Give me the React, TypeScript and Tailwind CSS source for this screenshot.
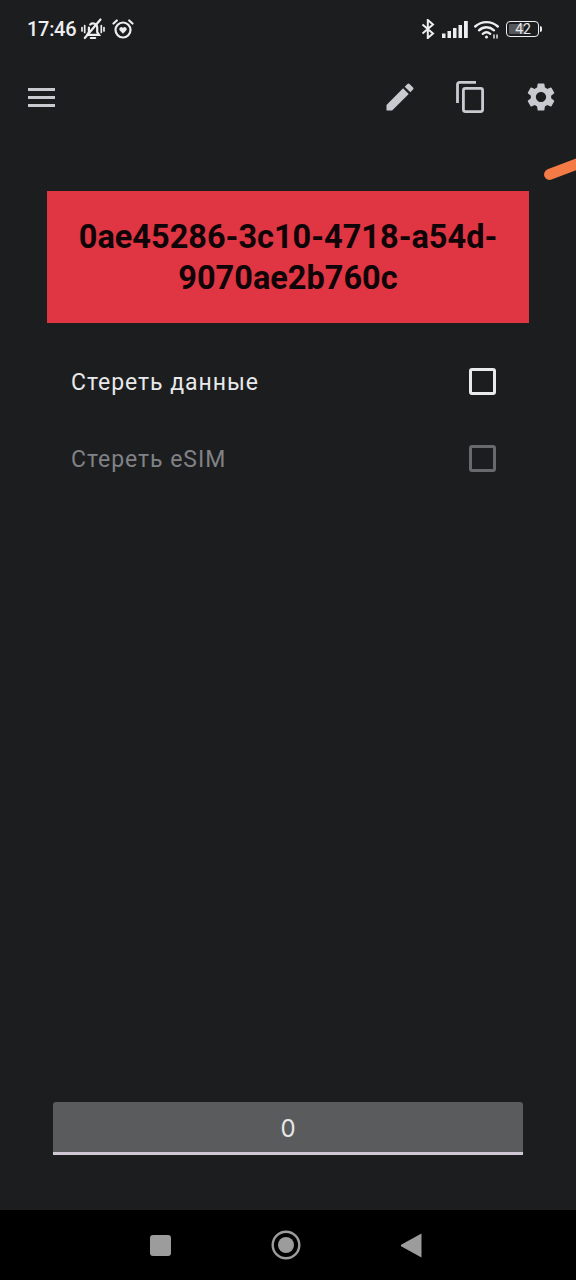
import { MdEdit, MdSettings } from 'react-icons/md'

function BellMuted() {
  return (
    <svg width="24" height="24" viewBox="0 0 24 24" fill="none" stroke="#eceef0" strokeWidth="2.200" strokeLinecap="round">
      <path d="M6.500 17.800h11.500l-1.800-2.600V10.500a4.200 4.200 0 0 0-7-3M7.900 10.500v4.700L6.300 17.800" />
      <path d="M9.800 21h4.400" strokeWidth="2.200" />
      <path d="M3.800 21 19.500 2.500" />
      <path d="M1 10.500v3.500M3.700 8.500v7M20.300 8.500v7M23 10.500v3.500" strokeWidth="1.700" />
    </svg>
  )
}

function AlarmHeart() {
  return (
    <svg width="22" height="22" viewBox="0 0 22 22" fill="none" stroke="#eceef0" strokeWidth="2.200" strokeLinecap="round">
      <circle cx="11" cy="12" r="7.500" />
      <path d="M1.500 5.500 4.800 2.500M20.500 5.500 17.200 2.500" />
      <path d="M11 15.800 7.600 12.300a2 2 0 0 1 3.400-2.200 2 2 0 0 1 3.400 2.200Z" fill="#eceef0" stroke="none" />
    </svg>
  )
}

function StatusRight() {
  return (
    <div className="flex items-center">
      <svg width="14" height="20" viewBox="0 0 14 20" fill="none" stroke="#eceef0" strokeWidth="2" className="mr-[7px]">
        <path d="M1.500 5.500 12 14.500 6.800 19V1L12 5.500 1.500 14.500" />
      </svg>
      <svg width="26" height="17" viewBox="0 0 26 17" fill="#eceef0" className="mr-[6px]">
        <rect x="0" y="12.500" width="3.500" height="4.500" />
        <rect x="5.500" y="10" width="3.500" height="7" />
        <rect x="11" y="7" width="3.500" height="10" />
        <rect x="16.500" y="4" width="3.500" height="13" />
        <rect x="22" y="0" width="3.800" height="17" />
      </svg>
      <svg width="26" height="19" viewBox="0 0 26 19" fill="none" stroke="#eceef0" strokeWidth="2.400" strokeLinecap="round" className="mr-[6px]">
        <path d="M1.200 6.500C7.500.6 17.500.6 23.800 6.500" />
        <path d="M5 10.300c4.500-4 10.500-4 15 0" />
        <path d="M8.800 13.800c2.400-2 5-2 7.400 0" />
        <circle cx="12.500" cy="17" r="1.500" fill="#eceef0" stroke="none" />
        <path d="M20 18v-3M23 18v-3" strokeWidth="1.400" />
      </svg>
      <div className="relative flex h-[16px] w-[33px] items-center rounded-[4px] border border-[#eceef0]">
        <div className="absolute inset-y-[2px] left-[2px] w-[15px] rounded-[1px] bg-[#55575a]" />
        <span className="relative w-full pl-[1px] text-center text-[14px] leading-none text-[#e6e8ea]">42</span>
      </div>
      <div className="ml-[1px] h-[6px] w-[2px] rounded-r-sm bg-[#eceef0]" />
    </div>
  )
}

function CopyIcon() {
  return (
    <svg width="28" height="32" viewBox="0 0 28 32" fill="none" stroke="#c8cad0" strokeWidth="2.800">
      <path d="M20 1.400H3.500a2 2 0 0 0-2 2V22" />
      <rect x="7.400" y="7.400" width="19.200" height="23.200" rx="2" />
    </svg>
  )
}

function CheckRow({ label, disabled }: { label: string; disabled?: boolean }) {
  return (
    <div className="flex h-[77px] items-center justify-between pl-[24px] pr-[33px]">
      <span className={`pt-[2px] text-[23px] tracking-[0.950px] ${disabled ? 'text-[#808285]' : 'text-[#e8e9ea]'}`}>{label}</span>
      <div className={`mb-[2px] h-[27px] w-[27px] rounded-[3px] border-[3px] ${disabled ? 'border-[#68696c]' : 'border-[#e8eaec]'}`} />
    </div>
  )
}

export default function App() {
  return (
    <div className="relative flex h-[1280px] w-[576px] flex-col overflow-hidden bg-[#1c1d1f] font-['Roboto',sans-serif]">
      {/* status bar */}
      <div className="flex h-[58px] shrink-0 items-center justify-between pl-[27px] pr-[34px]">
        <div className="flex items-center">
          <span className="text-[20px] font-medium tracking-[-0.300px] text-[#eceef0]">17:46</span>
          <span className="ml-[5px]"><BellMuted /></span>
          <span className="ml-[7px]"><AlarmHeart /></span>
        </div>
        <StatusRight />
      </div>

      {/* toolbar */}
      <div className="flex h-[78px] shrink-0 items-center justify-between pl-[28px] pr-[18px]">
        <div className="flex flex-col gap-[5px]">
          <div className="h-[3px] w-[27px] bg-[#c8cad0]" />
          <div className="h-[3px] w-[27px] bg-[#c8cad0]" />
          <div className="h-[3px] w-[27px] bg-[#c8cad0]" />
        </div>
        <div className="flex items-center">
          <MdEdit size={36} className="text-[#c8cad0]" />
          <span className="ml-[38px]"><CopyIcon /></span>
          <MdSettings size={34} className="ml-[40px] text-[#c8cad0]" />
        </div>
      </div>

      {/* id card */}
      <div className="mx-[47px] mt-[55px] flex h-[132px] w-[482px] shrink-0 items-center justify-center bg-[#e03542] px-[20px] pt-[2px]">
        <p className="text-center text-[32.500px] font-bold leading-[41px] text-[#0f0407]">0ae45286-3c10-4718-a54d-9070ae2b760c</p>
      </div>

      <div className="mx-[47px] mt-[21px] flex w-[482px] flex-col">
        <CheckRow label="Стереть данные" />
        <CheckRow label="Стереть eSIM" disabled />
      </div>

      <div className="flex-1" />

      {/* input */}
      <div className="mx-[53px] flex h-[53px] shrink-0 items-center justify-center rounded-t-[3px] border-b-[3px] border-[#cfc8d4] bg-[#5a5b5d] pt-[4px]">
        <span className="font-['Inter',sans-serif] text-[24px] text-[#e8e8e8]">0</span>
      </div>
      <div className="h-[55px] shrink-0" />

      {/* nav bar */}
      <div className="flex h-[70px] shrink-0 items-center justify-center gap-[100px] bg-black pr-[4px]">
        <div className="h-[21px] w-[21px] rounded-[3px] bg-[#9c9c9c]" />
        <svg width="30" height="30" viewBox="0 0 30 30">
          <circle cx="15" cy="15" r="13.300" fill="none" stroke="#9c9c9c" strokeWidth="2.400" />
          <circle cx="15" cy="15" r="8" fill="#9c9c9c" />
        </svg>
        <svg width="21" height="25" viewBox="0 0 21 25" fill="#9c9c9c">
          <path d="M20.500.5v24L.5 13.500a1.200 1.200 0 0 1 0-2Z" />
        </svg>
      </div>

      {/* stray stroke entering from the right edge */}
      <div className="absolute right-[-11px] top-[163px] h-[11px] w-[44px] -rotate-[21deg] rounded-full bg-[#f47b45]" />
    </div>
  )
}
